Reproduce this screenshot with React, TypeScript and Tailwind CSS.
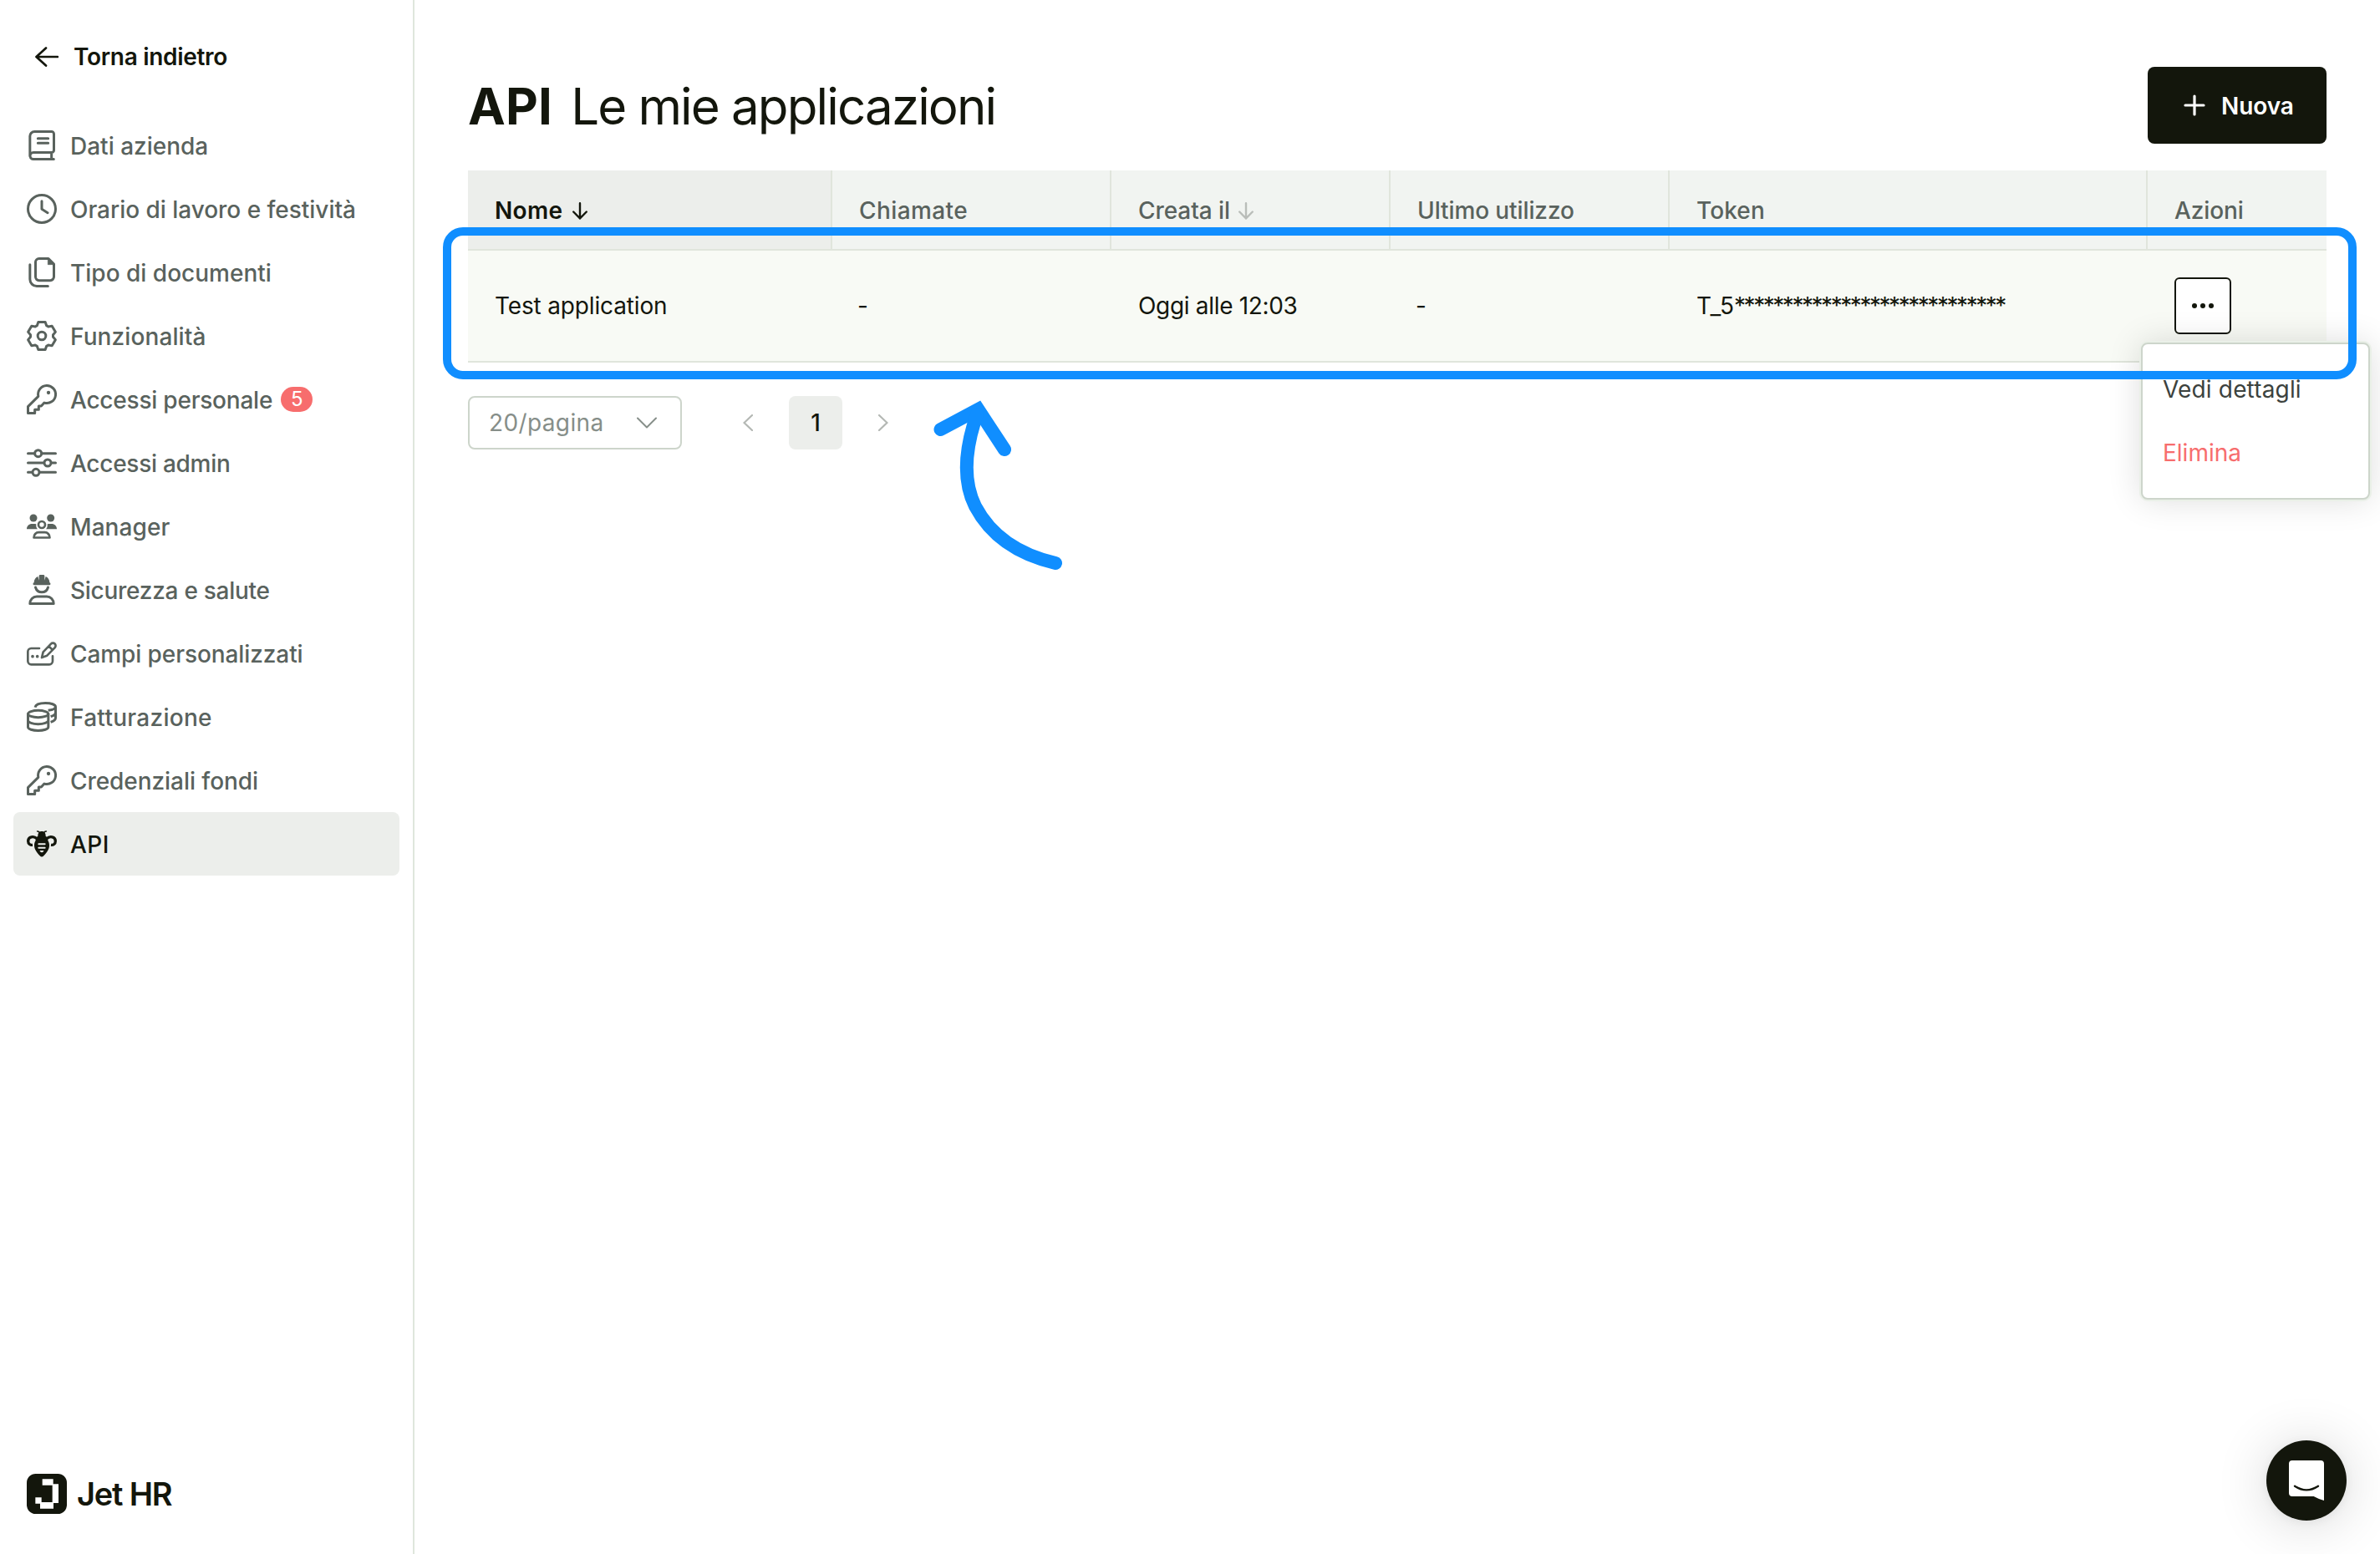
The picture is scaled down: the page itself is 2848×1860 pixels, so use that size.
import React from "react";
import clsx from "clsx";

type IconProps = { children: React.ReactNode };

// All sidebar icons share a 108 unit grid with a 9 unit stroke
const MenuIcon: React.FC<IconProps> = ({ children }) => (
  <svg
    viewBox="0 0 108 108"
    className="h-9 w-9 shrink-0 overflow-visible"
    fill="none"
    stroke="currentColor"
    strokeWidth="9"
    strokeLinecap="round"
    strokeLinejoin="round"
  >
    {children}
  </svg>
);

const BookIcon = () => (
  <MenuIcon>
    <path d="M11.5 92V21A16.5 16.5 0 0 1 28 4.5H89A8.5 8.5 0 0 1 97.5 13V71A8.5 8.5 0 0 1 89 79.5H24A12 12 0 0 0 24 103.5H97M89 80V103M40 29H77M40 46H77" />
  </MenuIcon>
);

const ClockIcon = () => (
  <MenuIcon>
    <circle cx="54" cy="54" r="49.5" />
    <path d="M54 26V55L75 68" />
  </MenuIcon>
);

const DocumentsIcon = () => (
  <MenuIcon>
    <path d="M44 4.5H78L97.5 24V70A13 13 0 0 1 84.5 83H44A13 13 0 0 1 31.5 70V17A13 13 0 0 1 44 4.5Z" />
    <path d="M76 4V26H98Z" fill="currentColor" strokeWidth="2" />
    <path d="M11.5 26V79A24.5 24.5 0 0 0 36 103.5H76" />
  </MenuIcon>
);

const GearIcon = () => (
  <MenuIcon>
    <g transform="translate(54 54)">
      <path d="M-12.5 -49.5H12.5L17 -37L23.5 -33.2L36.6 -35.6L49.1 -13.9L40.5 -3.8V3.8L49.1 13.9L36.6 35.6L23.5 33.2L17 37L12.5 49.5H-12.5L-17 37L-23.5 33.2L-36.6 35.6L-49.1 13.9L-40.5 3.8V-3.8L-49.1 -13.9L-36.6 -35.6L-23.5 -33.2L-17 -37Z" />
      <circle r="14.5" />
    </g>
  </MenuIcon>
);

const KeyIcon = () => (
  <MenuIcon>
    <path d="M41.5 43L4.5 80V103.5H29V91H43V78H52L63 66.2A31.5 31.5 0 1 0 41.5 43Z" />
    <circle cx="78" cy="30" r="6.5" fill="currentColor" stroke="none" />
  </MenuIcon>
);

const SlidersIcon = () => (
  <MenuIcon>
    <path d="M4.5 20H27M55 20H103.5M4.5 54H61M89 54H103.5M4.5 88H19M47 88H103.5" />
    <circle cx="41" cy="20" r="12" />
    <circle cx="75" cy="54" r="12" />
    <circle cx="33" cy="88" r="12" />
  </MenuIcon>
);

const ManagerIcon = () => (
  <MenuIcon>
    <g fill="currentColor" stroke="none">
      <circle cx="24" cy="24" r="13.5" />
      <circle cx="86" cy="24" r="13.5" />
      <path d="M0 64C0 53 8 45 19 45H28C30 45 32 45.5 34 46.5C33 53 34 59 39 64Z" />
      <path d="M108 64C108 53 100 45 89 45H80C78 45 76 45.5 74 46.5C75 53 74 59 69 64Z" />
    </g>
    <circle cx="54" cy="48" r="12" strokeWidth="8" />
    <path d="M25.5 94.5C25.5 84 33 75.5 43 75.5H65C75 75.5 82.5 84 82.5 94.5Z" strokeWidth="8" />
  </MenuIcon>
);

const HelmetIcon = () => (
  <MenuIcon>
    <path
      d="M26 36.5C21 36.5 22 29 26 28C26 17 32 9 40 6L44 20V4C44 1 47 0 49 0H59C61 0 64 1 64 4V20L68 6C76 9 82 17 82 28C86 29 87 36.5 82 36.5Z"
      fill="currentColor"
      stroke="none"
    />
    <path d="M31.5 45C35 57 43 62.5 54 62.5S73 57 76.5 45" />
    <path d="M11.5 103.5C11.5 89 22 78 36 78H72C86 78 96.5 89 96.5 103.5Z" />
  </MenuIcon>
);

const FieldsIcon = () => (
  <MenuIcon>
    <g strokeWidth="8">
      <path d="M45 36H16A12 12 0 0 0 4 48V82A12 12 0 0 0 16 94H81A12 12 0 0 0 93 82V64" />
      <path d="M54 69L59 49L87 20A9.5 9.5 0 0 1 101 33.5L73 62ZM79 28L93 42" />
    </g>
    <g fill="currentColor" stroke="none">
      <circle cx="21" cy="65" r="5.5" />
      <circle cx="38" cy="65" r="5.5" />
    </g>
  </MenuIcon>
);

const CoinsIcon = () => (
  <MenuIcon>
    <ellipse cx="41" cy="43.5" rx="36.5" ry="12.5" />
    <path d="M4.5 44V91C4.5 98 21 103.5 41 103.5S77.5 98 77.5 91V44M4.5 67C4.5 74 21 80 41 80S77.5 74 77.5 67" />
    <g strokeLinecap="butt">
      <path d="M30 20C32 10 48 4.5 67 4.5C88 4.5 103.5 10 103.5 18V58C103.5 65 98 69 86 73" />
      <path d="M103.5 18C103.5 25 92 29 77 31M103.5 38C103.5 45 98 49 86 53" />
    </g>
  </MenuIcon>
);

const BeeIcon = () => (
  <MenuIcon>
    <path d="M36 35C26 25 5 27 5 44C5 55 13 59 21 58M72 35C82 25 103 27 103 44C103 55 95 59 87 58" strokeWidth="10" strokeLinecap="butt" />
    <path d="M38 9C44 9 46 12 48 17M70 9C64 9 62 12 60 17" strokeWidth="5" />
    <path
      d="M54 9C64 9 68 16 68 26C75 31 77 37 76 42C80 48 81 54 81 60C81 76 68 89 61 97Q54 104 47 97C40 89 27 76 27 60C27 54 28 48 32 42C31 37 33 31 40 26C40 16 44 9 54 9Z"
      fill="currentColor"
      stroke="none"
    />
    <path d="M43 55H65M43 68H65" className="stroke-[#eceeeb]" strokeWidth="6" />
    <path d="M49 80H59L54 83Z" className="stroke-[#eceeeb]" strokeWidth="4" />
  </MenuIcon>
);

const menu = [
  { label: "Dati azienda", icon: <BookIcon />, text: "" },
  { label: "Orario di lavoro e festività", icon: <ClockIcon />, text: "tracking-[-0.03px]" },
  { label: "Tipo di documenti", icon: <DocumentsIcon />, text: "" },
  { label: "Funzionalità", icon: <GearIcon />, text: "tracking-[0.1px]" },
  { label: "Accessi personale", icon: <KeyIcon />, text: "tracking-[-0.22px]", badge: 5 },
  { label: "Accessi admin", icon: <SlidersIcon />, text: "tracking-[-0.27px]" },
  { label: "Manager", icon: <ManagerIcon />, text: "tracking-[0.08px]" },
  { label: "Sicurezza e salute", icon: <HelmetIcon />, text: "tracking-[-0.27px]" },
  { label: "Campi personalizzati", icon: <FieldsIcon />, text: "tracking-[-0.09px]" },
  { label: "Fatturazione", icon: <CoinsIcon />, text: "tracking-[0.28px]" },
  { label: "Credenziali fondi", icon: <KeyIcon />, text: "tracking-[-0.06px]" },
  { label: "API", icon: <BeeIcon />, text: "tracking-[0.5px]", active: true },
];

const Sidebar = () => (
  <aside className="flex w-[496px] shrink-0 flex-col border-r-2 border-[#dfe6dc] bg-white px-4 pt-9 pb-12">
    <a className="flex h-16 items-center pl-[26px] text-[#13160c]">
      <svg viewBox="0 0 28 24" className="mr-4 h-6 w-7" fill="none" stroke="currentColor" strokeWidth="2.7" strokeLinecap="round" strokeLinejoin="round">
        <path d="M27 12H2M13 1.5L1.5 12L13 22.5" />
      </svg>
      <span className="ml-0.5 font-semibold tracking-[-0.3px]">Torna indietro</span>
    </a>

    <nav className="mt-9 flex flex-col">
      {menu.map((item) => (
        <a
          key={item.label}
          className={clsx(
            "flex h-[76px] items-center gap-4 rounded-lg px-4 font-medium",
            item.active ? "bg-[#eceeeb] text-[#13160c]" : "text-[#59625d]"
          )}
        >
          {item.icon}
          <span className={clsx("pt-px", item.text)}>{item.label}</span>
          {item.badge && (
            <span className="-ml-1.5 flex h-[30px] w-[38px] items-center justify-center rounded-full bg-[#f76d6d] text-2xl font-normal text-white">
              {item.badge}
            </span>
          )}
        </a>
      ))}
    </nav>

    <div className="mt-auto flex items-center pl-4 text-[#13160c]">
      <svg viewBox="0 0 144 144" className="mr-3 h-12 w-12">
        <rect width="144" height="144" rx="32" fill="currentColor" />
        <path d="M56 19H95V37H114V105H96V125H48V107H31V85H53V102H92V41H56Z" fill="#fff" />
      </svg>
      <span className="text-[38px] leading-[48px] font-semibold tracking-[-1.2px]">Jet HR</span>
    </div>
  </aside>
);

const SortArrow = ({ className }: { className: string }) => (
  <svg viewBox="0 0 18 21" className={clsx("h-[21px] w-[18px]", className)} fill="none" stroke="currentColor" strokeWidth="2.4" strokeLinecap="round" strokeLinejoin="round">
    <path d="M9 1.2V19.5M1.2 11.5L9 19.5L16.8 11.5" />
  </svg>
);

const columns = "grid grid-cols-[436px_334px_334px_334px_572px_214px]";
const headCell = "flex items-center border-r-2 border-[#e0e5dc] pt-0.5 pl-8";

const ApplicationsTable = () => (
  <div className="mt-8 w-[2224px]">
    <div className={clsx(columns, "h-24 border-b-2 border-[#e0e5dc] bg-[#f1f4f1] font-medium text-[#59625d]")}>
      <div className={clsx(headCell, "bg-[#eceeeb] font-semibold text-[#13160c]")}>
        <span className="tracking-[0.33px]">Nome</span>
        <SortArrow className="ml-3" />
      </div>
      <div className={headCell}>
        <span className="tracking-[0.4px]">Chiamate</span>
      </div>
      <div className={headCell}>
        <span className="tracking-[-0.07px]">Creata il</span>
        <SortArrow className="ml-2.5 text-[#b9bdb9]" />
      </div>
      <div className={headCell}>
        <span className="tracking-[-0.1px]">Ultimo utilizzo</span>
      </div>
      <div className={headCell}>
        <span className="tracking-[0.1px]">Token</span>
      </div>
      <div className="flex items-center pt-0.5 pl-8">
        <span className="tracking-[-0.1px]">Azioni</span>
      </div>
    </div>

    <div className={clsx(columns, "h-[134px] items-center border-b-2 border-[#e0e5dc] bg-[#f8faf5] text-[#13160c]")}>
      <div className="pl-8 tracking-[-0.15px]">Test application</div>
      <div className="pl-[30px]">-</div>
      <div className="pl-8 tracking-[-0.32px]">Oggi alle 12:03</div>
      <div className="pl-[30px]">-</div>
      <div className="pl-8">
        T_5<span className="tracking-[-2.46px]">****************************</span>
      </div>
      <div className="relative pl-8">
        <button className="flex h-[68px] w-[68px] items-center justify-center gap-1 rounded-md border-2 border-[#13160c] bg-white">
          <span className="h-1.5 w-1.5 rounded-full bg-[#13160c]" />
          <span className="h-1.5 w-1.5 rounded-full bg-[#13160c]" />
          <span className="h-1.5 w-1.5 rounded-full bg-[#13160c]" />
        </button>

        {/* Row actions dropdown */}
        <div className="absolute top-[78px] -left-2 z-10 flex h-[188px] w-[274px] flex-col rounded-lg border-2 border-[#cdd5cb] bg-white pt-4 pl-6 shadow-[0_0_0_2px_#eaf0e8,0_0_40px_rgba(0,0,0,0.14)]">
          <span className="h-[76px] leading-[77px] tracking-[0.16px] text-[#3c423e]">Vedi dettagli</span>
          <span className="h-[76px] leading-[77px] text-[#f76d6d]">Elimina</span>
        </div>
      </div>
    </div>
  </div>
);

const Pagination = () => (
  <div className="mt-10 flex items-center">
    <div className="flex h-16 w-64 items-center justify-between rounded-lg border-2 border-[#cdd5cb] pr-7 pl-[23px] text-[#868e89]">
      <span className="tracking-[0.38px]">20/pagina</span>
      <svg viewBox="0 0 24 14" className="h-3.5 w-6" fill="none" stroke="currentColor" strokeWidth="2" strokeLinecap="round" strokeLinejoin="round">
        <path d="M1 1.5L12 12.5L23 1.5" />
      </svg>
    </div>
    <div className="ml-[47px] flex gap-[17px]">
      <span className="flex h-16 w-16 items-center justify-center text-[#b4b8b4]">
        <svg viewBox="0 0 12 20" className="h-5 w-3" fill="none" stroke="currentColor" strokeWidth="2.2" strokeLinecap="round">
          <path d="M11 1L1.5 10L11 19" />
        </svg>
      </span>
      <span className="flex h-16 w-16 items-center justify-center rounded-lg bg-[#eceeeb] font-medium text-[#13160c]">1</span>
      <span className="flex h-16 w-16 items-center justify-center text-[#b4b8b4]">
        <svg viewBox="0 0 12 20" className="h-5 w-3" fill="none" stroke="currentColor" strokeWidth="2.2" strokeLinecap="round">
          <path d="M1 1L10.5 10L1 19" />
        </svg>
      </span>
    </div>
  </div>
);

const App: React.FC = () => {
  return (
    <div className="relative flex h-[1860px] w-[2848px] overflow-hidden bg-white font-['Inter',sans-serif] text-[28px] leading-[36px]">
      <Sidebar />

      <main className="flex-1 pt-20 pl-16">
        <div className="flex h-[92px] w-[2224px] items-center justify-between text-[#13160c]">
          <h1 className="flex items-baseline pt-px text-[60px] leading-[92px]">
            <span className="font-bold tracking-[0.2px]">API</span>
            <span className="ml-[22px] tracking-[-1.84px]">Le mie applicazioni</span>
          </h1>
          <button className="flex h-[92px] w-[214px] items-center rounded-lg bg-[#13160c] pl-[43px] text-white">
            <svg viewBox="0 0 26 26" className="mr-[19px] h-[26px] w-[26px]" fill="none" stroke="currentColor" strokeWidth="3.2" strokeLinecap="round">
              <path d="M2 13H24M13 2V24" />
            </svg>
            <span className="pt-px font-semibold tracking-[-0.1px]">Nuova</span>
          </button>
        </div>
        <ApplicationsTable />
        <Pagination />
      </main>

      {/* Highlight around the application row */}
      <div className="absolute top-[272px] left-[530px] z-20 h-[182px] w-[2290px] rounded-[24px] border-[10px] border-[#108eff]" />
      <svg
        viewBox="1100 460 190 240"
        className="absolute top-[460px] left-[1100px] z-20 h-[240px] w-[190px]"
        fill="none"
        stroke="#108eff"
        strokeWidth="16"
        strokeLinecap="round"
      >
        <path d="M1125.5 514L1170.5 490L1202 538" />
        <path d="M1169 496C1152 545 1154 580 1167 606C1186 642 1220 664 1263 674" />
      </svg>

      {/* Chat launcher */}
      <button className="absolute right-10 bottom-10 z-20 h-24 w-24 rounded-full bg-[#13160c] shadow-[0_2px_12px_rgba(0,0,0,0.06),0_4px_64px_rgba(0,0,0,0.16)]">
        <svg viewBox="0 0 288 288" className="h-24 w-24">
          <path d="M93 72H195A12 12 0 0 1 207 84V216Q190 212 170 201H93A12 12 0 0 1 81 189V84A12 12 0 0 1 93 72Z" fill="#fff" />
          <path d="M102 164Q144 192 186 164" fill="none" stroke="#13160c" strokeWidth="7" strokeLinecap="round" />
        </svg>
      </button>
    </div>
  );
};

export default App;
